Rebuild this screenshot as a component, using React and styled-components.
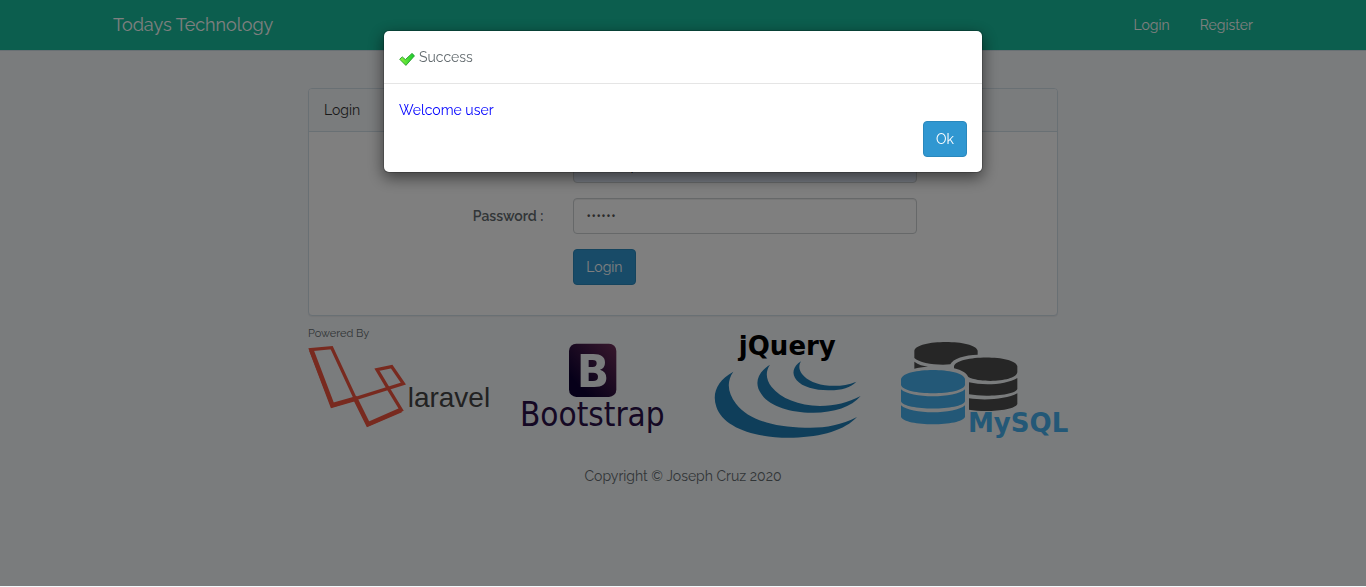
import React from 'react';
import styled, { createGlobalStyle } from 'styled-components';

const GlobalStyle = createGlobalStyle`
  *, *::before, *::after { box-sizing: border-box; }
  body {
    margin: 0;
    min-height: 100vh;
    background: #f5f8fa;
    color: #636b6f;
    font-family: Raleway, Lato, sans-serif;
    font-size: 14px;
    font-weight: 400;
    line-height: 22px;
  }
  button, input { font: inherit; }
`;

const Navbar = styled.nav`
  background: #18bc9c;
  border-bottom: 1px solid #d3e0e9;
`;

const Container = styled.div`
  max-width: 1170px;
  margin: 0 auto;
  padding: 0 15px;
`;

const NavContent = styled(Container)`
  display: flex;
  align-items: center;
  justify-content: space-between;
  height: 50px;
`;

const Brand = styled.a`
  color: #fff;
  font-size: 18px;
  text-decoration: none;
`;

const NavLinks = styled.div`
  display: flex;
  gap: 30px;
`;

const NavLink = styled.a`
  color: #fff;
  text-decoration: none;
`;

const Content = styled.main`
  max-width: 750px;
  margin: 37px auto 0;
`;

const Panel = styled.section`
  background: #fff;
  border: 1px solid #d3e0e9;
  border-radius: 4px;
  box-shadow: 0 1px 1px rgba(0, 0, 0, 0.05);
`;

const PanelHeading = styled.header`
  padding: 10px 15px;
  border-bottom: 1px solid #d3e0e9;
  border-radius: 3px 3px 0 0;
  background: #f5f8fa;
  color: #333;
`;

const LoginForm = styled.form`
  display: flex;
  flex-direction: column;
  gap: 15px;
  padding: 15px 0 30px;
`;

const FormRow = styled.div`
  display: grid;
  grid-template-columns: 4fr 6fr 2fr;
  align-items: center;
`;

const Label = styled.label`
  padding: 0 15px;
  text-align: right;
  font-weight: 600;
`;

const Field = styled.div`
  grid-column: 2;
  padding: 0 15px;
`;

const TextInput = styled.input`
  display: block;
  width: 100%;
  height: 36px;
  padding: 6px 12px;
  border: 1px solid #ccd0d2;
  border-radius: 4px;
  background: ${({ $filled }) => ($filled ? '#e8f0fe' : '#fff')};
  color: ${({ $filled }) => ($filled ? '#000' : '#555')};
  box-shadow: inset 0 1px 1px rgba(0, 0, 0, 0.075);
`;

const PrimaryButton = styled.button`
  height: 36px;
  padding: 6px 12px;
  border: 1px solid #2a88bd;
  border-radius: 4px;
  background: #3097d1;
  color: #fff;
`;

const PoweredBy = styled.p`
  margin: 14px 0 0;
  font-size: 11px;
  line-height: 8px;
`;

const Logos = styled.div`
  display: flex;
`;

const Logo = styled.svg`
  display: block;
  flex: none;
  width: 188px;
  height: 102px;
  overflow: visible;
`;

const Copyright = styled.footer`
  margin-top: 25px;
  text-align: center;
`;

const Backdrop = styled.div`
  position: fixed;
  inset: 0 0 1px;
  padding: 30px 10px;
  background: rgba(0, 0, 0, 0.5);
`;

const Dialog = styled.div`
  max-width: 600px;
  margin: 0 auto;
  border: 1px solid rgba(0, 0, 0, 0.2);
  border-radius: 6px;
  background: #fff;
  background-clip: padding-box;
  box-shadow: 0 5px 15px rgba(0, 0, 0, 0.5);
`;

const DialogHeader = styled.header`
  display: flex;
  gap: 4px;
  padding: 15px;
  border-bottom: 1px solid #e5e5e5;
`;

const CheckIcon = styled.svg`
  width: 16px;
  height: 16px;
  margin-top: 6px;
`;

const DialogTitle = styled.h1`
  margin: 0;
  font: inherit;
`;

const DialogBody = styled.div`
  padding: 15px;
`;

const Message = styled.p`
  margin: 0;
  color: #00f;
`;

const DialogActions = styled.div`
  display: flex;
  justify-content: flex-end;
`;

function LaravelLogo() {
  return (
    <Logo viewBox="24 54 564 306" role="img" aria-label="Laravel">
      <g fill="none" stroke="#f0553f" strokeLinejoin="miter">
        <path d="M32 89 L95 83 L166 236 L204 314 L304 270 L265 206 L231 149 L275 140 L310 191 L166 236 L97 257 Z" strokeWidth="10" />
        <path d="M34 90 L97 256 L166 236 L204 313 L303 270" strokeWidth="14" />
      </g>
      <text x="323" y="262" fill="#444" fontSize="84" fontFamily="'Liberation Sans', sans-serif">laravel</text>
    </Logo>
  );
}

function BootstrapLogo() {
  return (
    <Logo viewBox="-42 24 564 306" role="img" aria-label="Bootstrap">
      <defs>
        <linearGradient id="bootstrap-tile" x1="0" y1="1" x2="1" y2="0">
          <stop offset="0.2" stopColor="#0c0032" />
          <stop offset="1" stopColor="#70305a" />
        </linearGradient>
      </defs>
      <rect x="177" y="41" width="142" height="160" rx="22" fill="url(#bootstrap-tile)" />
      <path
        fill="#f5f8fa"
        fillRule="evenodd"
        d="M212 72 H250 Q285 72 285 98 Q285 114 270 119 Q289 124 289 144 Q289 171 253 171 H212 Z M236 90 V111 H248 Q260 111 260 100 Q260 90 248 90 Z M236 128 V153 H249 Q264 153 264 140 Q264 128 249 128 Z"
      />
      <text x="30" y="287" fill="#2a1048" fontSize="99" fontFamily="'DejaVu Sans Condensed', 'DejaVu Sans', sans-serif">Bootstrap</text>
    </Logo>
  );
}

function JQueryLogo() {
  return (
    <Logo viewBox="-48 24 564 306" role="img" aria-label="jQuery">
      <g fill="#1f7cb4">
        <path d="M100 125 C52 151 35 190 49 230 C68 291 165 326 280 323 C365 321 435 300 471 261 C420 287 370 295 315 293 C220 292 145 269 108 221 C84 190 78 156 100 125 Z" />
        <path d="M210 104 C169 129 163 164 184 192 C209 230 275 249 340 248 C402 248 455 231 482 198 C444 218 405 228 360 228 C296 227 242 205 215 171 C197 148 196 124 210 104 Z" />
        <path d="M303 94 C278 110 274 132 290 151 C308 172 348 182 390 181 C424 181 453 172 469 155 C441 166 416 169 388 167 C350 165 321 151 306 132 C296 118 296 106 303 94 Z" />
      </g>
      <text x="262" y="75" textAnchor="middle" fill="#000" fontSize="78" fontWeight="700" fontFamily="'DejaVu Sans', sans-serif">jQuery</text>
    </Logo>
  );
}

function MySqlLogo() {
  return (
    <Logo viewBox="-54 24 564 306" role="img" aria-label="MySQL">
      <g fill="#4d4d4d">
        <path d="M73 62 C78 27 257 27 263 62 V74 C225 75 188 86 181 103 C140 107 88 99 73 84 Z" />
        <path d="M73 95 C85 104 100 108 114 110 C98 111 84 113 73 116 Z" />
        <path d="M192 109 C200 74 376 73 382 109 V127 C378 156 270 160 235 141 C229 129 215 120 192 115 Z" />
        <path d="M237 157 C282 168 350 164 382 144 V177 C376 196 285 202 237 193 Z" />
        <path d="M237 205 C285 212 350 208 382 190 V222 C375 242 284 248 237 239 Z" />
      </g>
      <g fill="#46b0ee">
        <path d="M33 147 C41 111 217 111 225 147 V165 C217 198 41 198 33 165 Z" />
        <path d="M33 178 C62 206 195 206 225 178 V214 C216 243 42 243 33 214 Z" />
        <path d="M33 226 C62 254 195 254 225 226 V260 C216 290 42 290 33 260 Z" />
        <text x="234" y="307" fontSize="78" fontWeight="700" fontFamily="'DejaVu Sans', sans-serif">MySQL</text>
      </g>
    </Logo>
  );
}

export default function App() {
  return (
    <>
      <GlobalStyle />
      <Navbar>
        <NavContent>
          <Brand href="#">Todays Technology</Brand>
          <NavLinks>
            <NavLink href="#login">Login</NavLink>
            <NavLink href="#register">Register</NavLink>
          </NavLinks>
        </NavContent>
      </Navbar>
      <Content>
        <Panel>
          <PanelHeading>Login</PanelHeading>
          <LoginForm onSubmit={(event) => event.preventDefault()}>
            <FormRow>
              <Label htmlFor="email">Email :</Label>
              <Field>
                <TextInput id="email" type="email" defaultValue="developer@mail.com" $filled />
              </Field>
            </FormRow>
            <FormRow>
              <Label htmlFor="password">Password :</Label>
              <Field>
                <TextInput id="password" type="password" defaultValue="secret" />
              </Field>
            </FormRow>
            <FormRow>
              <Field>
                <PrimaryButton type="submit">Login</PrimaryButton>
              </Field>
            </FormRow>
          </LoginForm>
        </Panel>
        <PoweredBy>Powered By</PoweredBy>
        <Logos>
          <LaravelLogo />
          <BootstrapLogo />
          <JQueryLogo />
          <MySqlLogo />
        </Logos>
      </Content>
      <Copyright>Copyright © Joseph Cruz 2020</Copyright>
      <Backdrop>
        <Dialog role="dialog" aria-modal="true" aria-labelledby="dialog-title">
          <DialogHeader>
            <CheckIcon viewBox="0 0 16 16" aria-hidden="true">
              <defs>
                <linearGradient id="check-fill" x1="0" x2="1">
                  <stop offset="0" stopColor="#8df23c" />
                  <stop offset="1" stopColor="#12c92c" />
                </linearGradient>
              </defs>
              <path d="M0.7 7.2 L3.3 4.9 L6.4 7.6 L13 1.4 L15.5 3.8 L6.9 13.4 Z" fill="url(#check-fill)" stroke="#259b2b" strokeWidth="0.9" strokeLinejoin="round" />
            </CheckIcon>
            <DialogTitle id="dialog-title">Success</DialogTitle>
          </DialogHeader>
          <DialogBody>
            <Message>Welcome user</Message>
            <DialogActions>
              <PrimaryButton type="button">Ok</PrimaryButton>
            </DialogActions>
          </DialogBody>
        </Dialog>
      </Backdrop>
    </>
  );
}
